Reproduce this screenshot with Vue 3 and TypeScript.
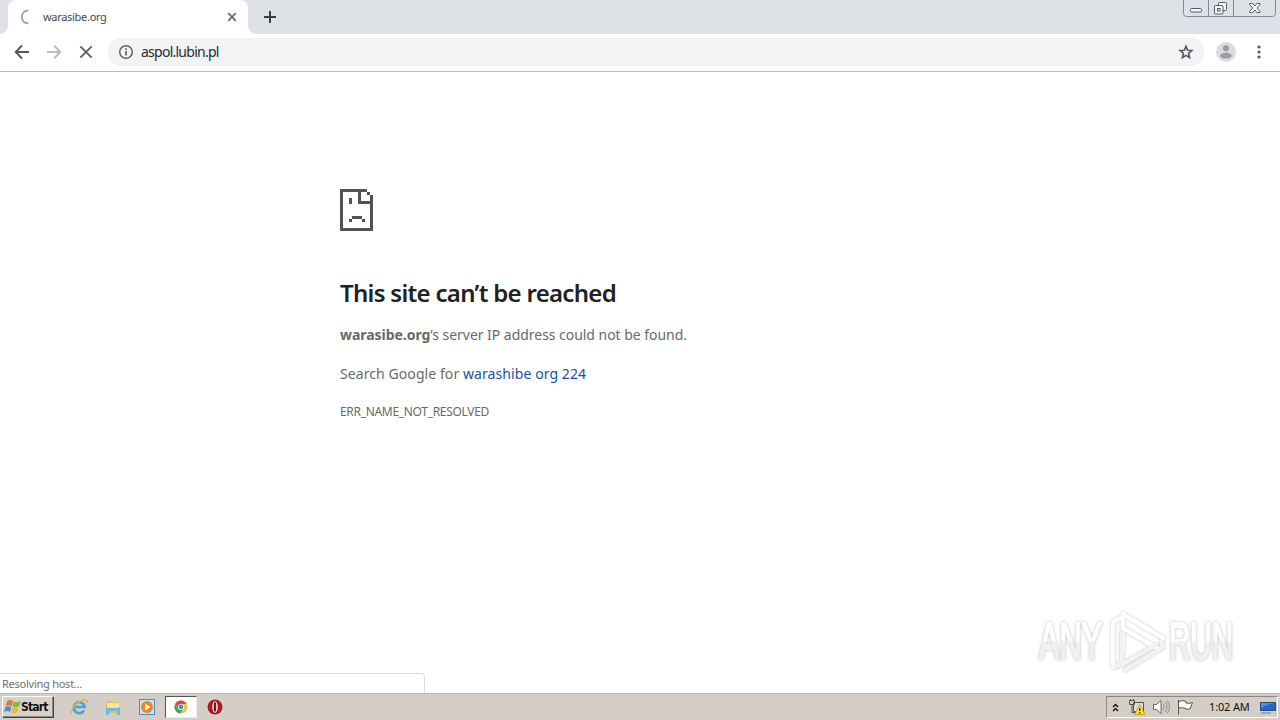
<script setup lang="ts">
interface Tab { title: string; address: string }
const tab: Tab = { title: 'warasibe.org', address: 'aspol.lubin.pl' }
const clock: string = '1:02 AM'
</script>

<template>
  <div class="screen">
    <header class="strip">
      <div class="tab">
        <svg class="spinner" width="16" height="16" viewBox="0 0 16 16"><path d="M9.500 1.800C5.300 1 2.800 4.600 2.800 8S5.500 15 9.500 14.200" fill="none" stroke="#a3a6aa" stroke-width="1.900" /></svg>
        <span class="tab-title">{{ tab.title }}</span>
        <svg class="tab-close" width="10" height="10" viewBox="0 0 10 10"><path d="M1.200 1.200l7.600 7.600M8.800 1.200L1.200 8.800" stroke="#66696d" stroke-width="1.700" /></svg>
      </div>
      <svg class="plus" width="12" height="12" viewBox="0 0 12 12"><path d="M6 0v12M0 6h12" stroke="#3c4043" stroke-width="2" /></svg>
      <div class="controls">
        <svg width="94" height="17" viewBox="0 0 94 17" fill="none">
          <path d="M.5 0v13.500q0 3 3 3h86q3 0 3-3V0M25.500 0v16M50.500 0v16" stroke="#858991" />
          <g stroke="#535967" fill="#f6f7f9">
            <rect x="7.500" y="8.500" width="11" height="3.500" rx="1.200" />
            <rect x="35.500" y="2.500" width="8" height="8" rx="1" />
            <rect x="31.500" y="5.500" width="8.500" height="8.500" rx="1" />
            <rect x="34.500" y="8.500" width="2.500" height="2.500" />
            <path d="M66.500 3.500h3.300l2 2.600 2-2.600h3.300v1L73.900 8l3.200 3.500v1h-3.300l-2-2.600-2 2.600h-3.300v-1L69.700 8l-3.200-3.500z" />
          </g>
        </svg>
      </div>
    </header>

    <nav class="toolbar">
      <svg class="nav" width="16" height="16" viewBox="0 0 16 16"><path d="M15 8H2M8 1.500L1.700 8 8 14.500" fill="none" stroke="#54575b" stroke-width="1.900" /></svg>
      <svg class="nav" width="16" height="16" viewBox="0 0 16 16"><path d="M1 8h13M8 1.500L14.300 8 8 14.500" fill="none" stroke="#babcbe" stroke-width="1.900" /></svg>
      <svg class="nav" width="16" height="16" viewBox="0 0 16 16"><path d="M2.300 2.300l11.400 11.400M13.700 2.300L2.300 13.700" stroke="#5b5e62" stroke-width="1.800" /></svg>
      <div class="omnibox">
        <svg width="16" height="16" viewBox="0 0 16 16"><circle cx="8" cy="8" r="6.300" fill="none" stroke="#5f6368" stroke-width="1.500" /><path d="M8 7v4.600M8 4.300v1.600" stroke="#5f6368" stroke-width="1.700" /></svg>
        <span class="address">{{ tab.address }}</span>
        <svg class="star" width="16" height="16" viewBox="0 0 16 16"><path d="M8 2.200l1.600 4 4.300.3-3.300 2.800 1 4.300L8 11.400l-3.600 2.200 1-4.300-3.300-2.800 4.300-.3z" fill="none" stroke="#54575b" stroke-width="1.600" /></svg>
      </div>
      <svg class="avatar" width="20" height="20" viewBox="0 0 20 20"><circle cx="10" cy="10" r="10" fill="#dadce0" /><circle cx="10" cy="6.300" r="3.100" fill="#9b9da0" /><ellipse cx="10" cy="13.700" rx="5.800" ry="2.900" fill="#9b9da0" /></svg>
      <svg class="dots" width="4" height="14" viewBox="0 0 4 14" fill="#55585c"><circle cx="2" cy="2" r="1.600" /><circle cx="2" cy="7" r="1.600" /><circle cx="2" cy="12" r="1.600" /></svg>
    </nav>

    <main class="page">
      <svg class="sad" width="33" height="42" viewBox="0 0 33 42" shape-rendering="crispEdges" fill="#535353"><path d="M0 0h27v3H3v36h27V15H18V0h3v12h12v30H0zM27 3h3v3h-3zM30 6h3v6h-3z" /><path d="M9 9h3v6H9zM12 27h10v3H12zM9 30h3v3H9zM22 30h3v3h-3z" /></svg>
      <h1>This site can’t be reached</h1>
      <p class="reason"><strong>warasibe.org</strong><span>’s server IP address could not be found.</span></p>
      <p class="search">Search Google for <a>warashibe org 224</a></p>
      <p class="code">ERR_NAME_NOT_RESOLVED</p>
      <div class="status"><span>Resolving host...</span></div>
      <svg class="watermark" width="210" height="70" viewBox="0 0 210 70">
        <defs>
          <linearGradient id="fade" gradientUnits="userSpaceOnUse" x1="0" y1="17" x2="0" y2="54">
            <stop offset="0.48" stop-color="#fff" />
            <stop offset="0.56" stop-color="#f0f0f0" />
          </linearGradient>
        </defs>
        <g class="wordmark">
          <text x="9" y="54" textLength="63" lengthAdjust="spacingAndGlyphs">ANY</text>
          <text x="139" y="54" textLength="64" lengthAdjust="spacingAndGlyphs">RUN</text>
        </g>
        <g class="mark">
          <path d="M90 13l-7 4v45l5-2M93 44V9l40 24M96 25l31 18" />
          <path class="shade" d="M85 62l7-4V27M95 65l38-23-2-6M93 59l33-19" />
        </g>
      </svg>
    </main>

    <footer class="taskbar">
      <button class="start">
        <svg width="18" height="16" viewBox="0 0 18 16"><path d="M3.200 2.300q3-2.300 5.800-.3L7.600 7.200q-3-1.700-6 0z" fill="#df713d" /><path d="M9.800 2.500q3 1.600 7-.8L15 7.200q-3.500 1.900-6.500 0z" fill="#82b34e" /><path d="M1.300 8q3-1.600 6 0L6 13q-3-2-6 0z" fill="#508bd1" /><path d="M8.300 8.300q3 1.600 6.500-.1L13.200 13.500q-3 1.900-6.300 0z" fill="#edb640" /></svg>
        <span>Start</span>
      </button>
      <div class="apps">
        <div class="app">
          <svg width="18" height="18" viewBox="0 0 18 18" fill="none"><path d="M14 12.500a5.500 5.500 0 1 1 .7-3.500H5" stroke="#45a6dc" stroke-width="2.700" /><path d="M2 16C-1 14 5 5 13 2q5-1.500 3.500 3" stroke="#dfb34b" stroke-width="1.400" /></svg>
        </div>
        <div class="app">
          <svg width="18" height="18" viewBox="0 0 18 18"><path d="M2 3h5l1 1h7v11H2z" fill="#e5bd58" /><path d="M3 5h12v7H3z" fill="#f9e49b" /><path d="M2 9h14v8h-3v-4H5v4H2z" fill="#72b9e2" /><path d="M3 9.500h12" stroke="#bfe4f5" /></svg>
        </div>
        <div class="app">
          <svg width="18" height="18" viewBox="0 0 18 18"><rect x="1.500" y="1.500" width="15" height="15" fill="#c8e2f6" stroke="#4b8dc6" /><circle cx="9" cy="9" r="6" fill="#ee861c" /><path d="M7 5.500v7L12.500 9z" fill="#fff" /></svg>
        </div>
        <div class="app active">
          <svg width="14" height="14" viewBox="0 0 14 14"><circle cx="7" cy="7" r="6.500" fill="#f0c539" /><path d="M1.300 3.800A6.500 6.500 0 0 1 12.700 4H7L4.300 8.500z" fill="#d84b3e" /><path d="M1.300 3.800L4.400 9 8.800 9.500 6.500 13.500A6.500 6.500 0 0 1 1.300 3.800z" fill="#43a25d" /><circle cx="7" cy="7" r="3.100" fill="#fff" /><circle cx="7" cy="7" r="2.400" fill="#4b88df" /></svg>
        </div>
        <div class="app">
          <svg width="16" height="16" viewBox="0 0 16 16"><circle cx="8" cy="8" r="7.500" fill="#a91b20" /><ellipse cx="8" cy="8" rx="2.700" ry="5.700" fill="#fff" /><ellipse cx="8" cy="8" rx="1.300" ry="4.900" fill="#811216" /></svg>
        </div>
      </div>
      <div class="tray">
        <svg class="chevrons" width="7" height="9" viewBox="0 0 7 9"><path d="M1 4l2.500-2.500L6 4M1 8l2.500-2.500L6 8" fill="none" stroke="#111" stroke-width="1.400" /></svg>
        <svg class="network" width="16" height="16" viewBox="0 0 16 16"><path d="M4.500 3.500h10v9h-10z" fill="#ddd" stroke="#555" /><path d="M.5 1.500h5v4h-5zM1.500 0v2M4.500 0v2M3 6v7.500h5" fill="none" stroke="#555" /><path d="M10.500 5.500L16 15.500H5.500z" fill="#ffdf2c" stroke="#b58e05" stroke-width=".7" /><path d="M10.700 9v3M10.700 13v1.300" stroke="#222" stroke-width="1.300" /></svg>
        <svg class="speaker" width="17" height="16" viewBox="0 0 17 16" fill="none" stroke="#666"><path d="M.5 5.500h3L8 1.500v13l-4.500-4h-3z" fill="#fff" /><path d="M10 5q2.500 3 0 6M12 3q4 5 0 10M14 1.500q5 6.500 0 13" stroke="#8d8d8d" /></svg>
        <svg class="flag" width="17" height="16" viewBox="0 0 17 16"><path d="M1.500 1v14.500M2 2.500q4-2 7 0v1.500q3 1 6.500-.5L13 10q-3 1-6-1-2.500-.7-5 0" fill="#fff" stroke="#555" /></svg>
        <span class="clock">{{ clock }}</span>
        <svg class="desktop" width="16" height="13" viewBox="0 0 16 13"><path d="M.5 1.500h15v8H.5z" fill="#2865bd" stroke="#244c83" /><path d="M1 7q6-4 14-5V2H1z" fill="#5392dc" /><path d="M1 12h10" stroke="#8498ae" stroke-width="1.500" /></svg>
      </div>
    </footer>
  </div>
</template>

<style>
html, body { margin: 0; overflow: hidden; }
</style>

<style scoped>
* { box-sizing: border-box; }
svg { display: block; flex: none; }
.screen { width: 1280px; height: 720px; display: flex; flex-direction: column; background: #fff; font-family: "Noto Sans", "Open Sans", sans-serif; overflow: hidden; white-space: nowrap; }
.strip { height: 34px; background: #dee1e6; display: flex; flex: none; padding-left: 8px; }
.tab { position: relative; width: 240px; height: 34px; background: #fff; border-radius: 8px 8px 0 0; display: flex; align-items: center; padding: 0 11px; }
.tab::before, .tab::after { content: ""; position: absolute; bottom: 0; width: 8px; height: 8px; }
.tab::before { left: -8px; background: radial-gradient(circle at 0 0, #dee1e6 7.5px, #fff 8px); }
.tab::after { right: -8px; background: radial-gradient(circle at 100% 0, #dee1e6 7.5px, #fff 8px); }
.tab-title { margin-left: 8px; color: #45484c; font-size: 11px; line-height: 16px; letter-spacing: -.3px; }
.tab-close { margin-left: auto; }
.plus { margin: 11px 0 0 16px; }
.controls { margin-left: auto; margin-right: 3px; }
.toolbar { height: 38px; flex: none; border-bottom: 1px solid #b9bbbc; display: flex; align-items: center; padding: 0 19px 1px 14px; }
.nav { margin-right: 16px; }
.nav:nth-child(3) { margin-right: 14px; }
.omnibox { width: 1096px; height: 28px; border-radius: 14px; background: #f1f3f4; display: flex; flex: none; align-items: center; padding: 0 10px; }
.address { margin-left: 7px; color: #292c30; font-size: 14px; line-height: 20px; letter-spacing: -.75px; }
.star { margin-left: auto; }
.avatar { margin-left: 12px; }
.dots { margin-left: 21px; }
.page { position: relative; height: 621px; flex: none; padding: 117px 0 0 340px; color: #696969; }
h1 { margin: 46px 0 0; height: 32px; line-height: 32px; font-size: 24px; font-weight: 600; letter-spacing: -.7px; color: #202124; }
p { margin: 0; font-size: 14px; line-height: 20px; }
.reason { margin-top: 16px; letter-spacing: -.04px; }
.search { margin-top: 19px; letter-spacing: .08px; }
.search a { color: #1a4f9f; }
.code { margin-top: 18px; font-size: 12px; letter-spacing: -.31px; }
.status { position: absolute; left: -1px; bottom: 1px; width: 426px; height: 20px; border: 1px solid #dadcdd; border-bottom: 0; border-radius: 0 4px 0 0; padding-left: 2px; color: #707070; font-size: 11px; line-height: 19px; letter-spacing: -.25px; transform: translateY(1px); }
.watermark { position: absolute; left: 1030px; top: 533px; overflow: visible; }
.wordmark { font-family: "Liberation Sans", sans-serif; font-size: 51px; fill: url(#fade); stroke: url(#fade); stroke-width: 2.2px; filter: drop-shadow(0 0 1.8px #bcbcbc); }
.mark { fill: none; stroke: #fff; stroke-width: 4.5px; stroke-linejoin: round; stroke-linecap: round; filter: drop-shadow(0 0 1.3px #bcbcbc); }
.shade { stroke: #f2f2f2; }
.taskbar { height: 27px; flex: none; background: #d4cec7; border-top: 1px solid #bab7b2; display: flex; align-items: flex-start; padding: 2px 2px 0; }
.start { width: 51px; height: 21px; border: 1px solid; border-color: #fff #8d8882 #8d8882 #fff; box-shadow: 1px 1px #44413e; background: #d7d1ca; padding: 0 1px; display: flex; align-items: center; font: 700 12px "DejaVu Sans Condensed", "DejaVu Sans", sans-serif; letter-spacing: -.85px; color: #111; }
.start span { margin-left: -1px; }
.apps { display: flex; margin-left: 10px; gap: 2px; }
.app { width: 32px; height: 22px; display: flex; align-items: center; justify-content: center; }
.active { background: #fff; border: 1px solid; border-color: #555 #eee #eee #555; }
.tray { margin-left: auto; width: 172px; height: 22px; border: 1px solid; border-color: #8d8882 #fff #fff #8d8882; display: flex; align-items: center; padding-left: 5px; }
.network { margin-left: 10px; }
.speaker { margin-left: 8px; }
.flag { margin-left: 7px; }
.clock { margin-left: 15px; width: 42px; font-size: 11px; line-height: 16px; color: #111; letter-spacing: -.15px; }
.desktop { margin-left: 9px; }
</style>
